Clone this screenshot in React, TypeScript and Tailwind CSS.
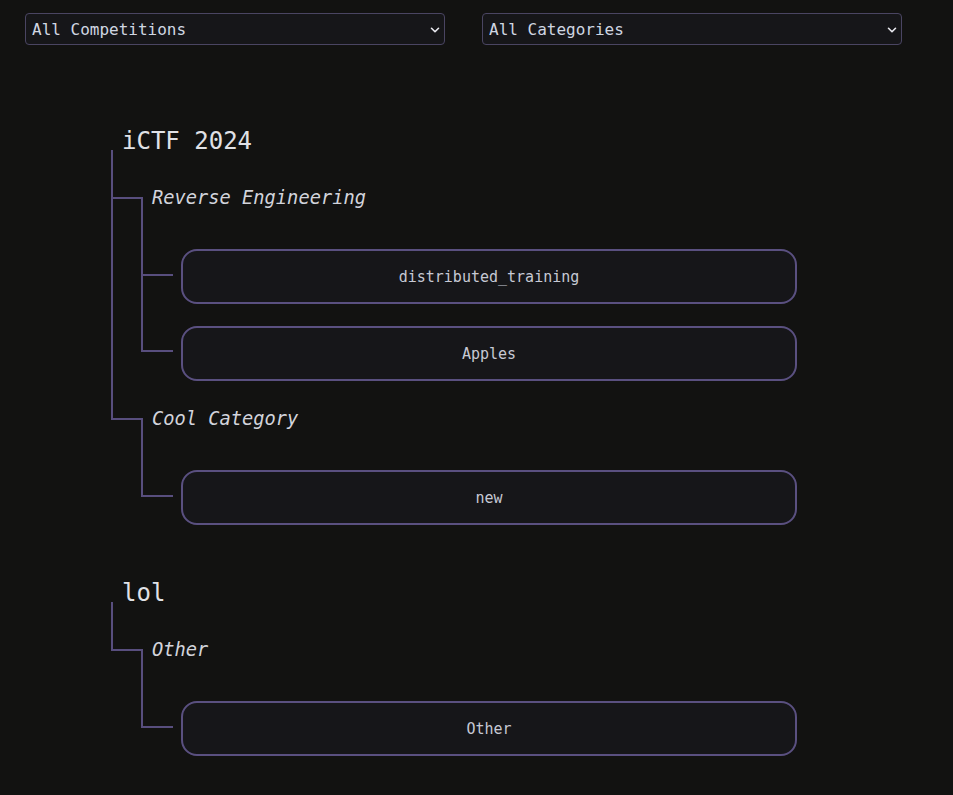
import React from 'react';
import { ChevronDown } from 'lucide-react';

interface Category {
  name: string;
  challenges: string[];
}

interface Competition {
  name: string;
  categories: Category[];
}

const competitions: Competition[] = [
  {
    name: 'iCTF 2024',
    categories: [
      { name: 'Reverse Engineering', challenges: ['distributed_training', 'Apples'] },
      { name: 'Cool Category', challenges: ['new'] },
    ],
  },
  {
    name: 'lol',
    categories: [{ name: 'Other', challenges: ['Other'] }],
  },
];

const mono = { fontFamily: '"DejaVu Sans Mono", "Liberation Mono", monospace' };

const Select = ({ label }: { label: string }) => (
  <div className="relative w-[420px]">
    <select
      className="w-full h-[32px] appearance-none rounded-[4px] border border-[#4a4562] bg-[#161619] pl-[6px] pt-[1px] text-[16px] text-[#d0d6e2] outline-none"
      style={mono}
      defaultValue={label}
    >
      <option>{label}</option>
    </select>
    <ChevronDown
      size={14}
      strokeWidth={2.75}
      className="pointer-events-none absolute right-[3px] top-[10px] text-[#e8e8ee]"
    />
  </div>
);

const ChallengeRow = ({ name, first, last }: { name: string; first: boolean; last: boolean }) => (
  <div className="flex">
    <div className="flex w-[32px] shrink-0 flex-col">
      <div className={`${first ? 'h-[77px]' : 'h-[48px]'} border-b-2 border-l-2 border-[#584e7e]`} />
      {!last && <div className="flex-1 border-l-2 border-[#584e7e]" />}
    </div>
    <div className={`${first ? 'pt-[50px]' : 'pt-[22px]'} pl-[8px]`}>
      <div className="flex h-[55px] w-[616px] items-center justify-center rounded-[16px] border-2 border-[#5a5080] bg-[#161619] pt-[1px] text-[15px] text-[#c6c9d4]">
        {name}
      </div>
    </div>
  </div>
);

const CategoryRow = ({ category, first, last }: { category: Category; first: boolean; last: boolean }) => (
  <div className="flex">
    <div className="flex w-[30px] shrink-0 flex-col">
      <div className={`${first ? 'h-[49px]' : 'h-[39px]'} border-b-2 border-l-2 border-[#584e7e]`} />
      {!last && <div className="flex-1 border-l-2 border-[#584e7e]" />}
    </div>
    <div className={first ? 'pt-[47px]' : 'pt-[37px]'}>
      <div className="flex h-[2px] items-center border-l-2 border-[#584e7e] pl-[9px]">
        <span className="whitespace-nowrap text-[18.72px] italic text-[#d2d4dc]">{category.name}</span>
      </div>
      {category.challenges.map((c, i) => (
        <ChallengeRow key={c + i} name={c} first={i === 0} last={i === category.challenges.length - 1} />
      ))}
    </div>
  </div>
);

export default function App() {
  return (
    <div className="min-h-screen bg-[#121211] pt-[13px] pb-[40px]" style={mono}>
      <div className="ml-[25px] flex gap-[37px]">
        <Select label="All Competitions" />
        <Select label="All Categories" />
      </div>

      <div className="ml-[111px] mt-[87px] flex flex-col gap-[59px]">
        {competitions.map((comp) => (
          <div key={comp.name}>
            <div className="h-[18px] pl-[11px] text-[24px] leading-[18px] text-[#e0e1e6]">{comp.name}</div>
            <div>
              {comp.categories.map((cat, i) => (
                <CategoryRow
                  key={cat.name}
                  category={cat}
                  first={i === 0}
                  last={i === comp.categories.length - 1}
                />
              ))}
            </div>
          </div>
        ))}
      </div>
    </div>
  );
}
